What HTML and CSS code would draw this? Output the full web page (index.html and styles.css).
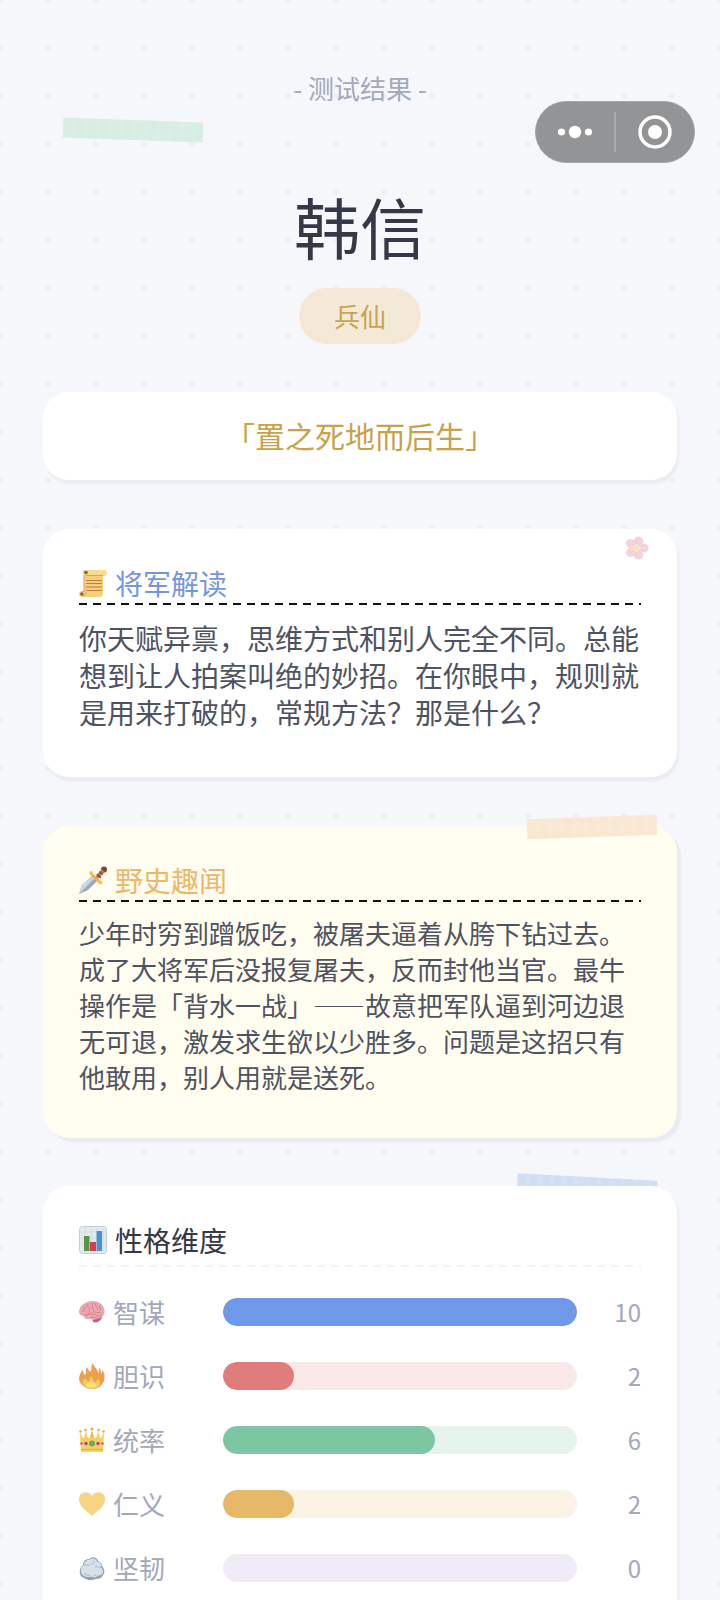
FILE: index.html
```html
<!DOCTYPE html>
<html lang="zh-CN">
<head>
<meta charset="utf-8">
<meta name="viewport" content="width=device-width, initial-scale=1">
<title>测试结果</title>
<link rel="stylesheet" href="styles.css">
</head>
<body>
<div class="capsule">
  <button class="capsule-btn" type="button" aria-label="更多">
    <svg width="36" height="36" viewBox="0 0 36 36" fill="#fff"><circle cx="4.500" cy="18" r="3.600"/><circle cx="18" cy="18" r="6.200"/><circle cx="31.500" cy="18" r="3.600"/></svg>
  </button>
  <span class="capsule-line"></span>
  <button class="capsule-btn" type="button" aria-label="关闭">
    <svg width="36" height="36" viewBox="0 0 36 36"><circle cx="18" cy="18" r="15" fill="none" stroke="#fff" stroke-width="3.500"/><circle cx="18" cy="18" r="7" fill="#fff"/></svg>
  </button>
</div>
<main class="page">
  <header class="hero">
    <span class="tape tape-green"></span>
    <p class="hero-label">- 测试结果 -</p>
    <h1 class="hero-name">韩信</h1>
    <span class="badge">兵仙</span>
  </header>

  <blockquote class="card quote">「置之死地而后生」</blockquote>

  <section class="card reading">
    <svg class="flower" width="24" height="24" viewBox="0 0 24 24"><g fill="#df92ae"><circle cx="13.500" cy="5" r="4.600"/><circle cx="19" cy="12" r="4.600"/><circle cx="13.500" cy="19" r="4.600"/><circle cx="5.500" cy="16.500" r="4.600"/><circle cx="5.500" cy="7.500" r="4.600"/><circle cx="11.500" cy="12" r="5"/></g><path d="M11.500 5v5.500L5.500 8.500M5.500 16l6-2.500V19M18 12h-5" stroke="#c76a92" stroke-width=".8" fill="none"/><path d="M12 7l1.500 3 3.500 2-3.500 2-1.500 3.500-2-3-4 .5 2.500-3L6 9l4 .5z" fill="#f6c35a"/></svg>
    <h2 class="card-title blue">
      <svg width="28" height="28" viewBox="0 0 28 28"><path d="M6 1h19c4 0 3 6 0 6h-1v17c0 3-1 4-3 4H3c-4 0-4-6 0-6h2V6C3 4 3 1 6 1z" fill="#f5d07c"/><path d="M6 1h19c4 0 3 6 0 6H8" fill="#fbdc8c"/><path d="M5 6v15M7 6.500h17M3 22h2c3 1 2 5-1 5" stroke="#d5a452" fill="none"/><circle cx="7" cy="3.500" r="1.800" fill="#8d6038"/><circle cx="2.800" cy="25" r="1.700" fill="#8d6038"/><path d="M7 11.500h16M7 14.500h16M7 18h16M7 21.500h16" stroke="#c17c42" stroke-width="1.200"/></svg>
      将军解读
    </h2>
    <p class="reading-text">你天赋异禀，思维方式和别人完全不同。总能想到让人拍案叫绝的妙招。在你眼中，规则就是用来打破的，常规方法？那是什么？</p>
  </section>

  <section class="card anecdote">
    <span class="tape tape-orange"></span>
    <h2 class="card-title orange">
      <svg width="28" height="28" viewBox="0 0 28 28"><path d="M0 28l3-9L13 10l5 5-9 9z" fill="#9aa8b4"/><path d="M0 28l3-9L13 10l2.500 2.500z" fill="#cbd5dd"/><path d="M15 12l8-9 3 3-8 8z" fill="#c07a55"/><path d="M18 8l4 4M20.500 5.500l3 3" stroke="#854b36" stroke-width="1.500"/><path d="M12 7.500L21.500 17" stroke="#e9b44c" stroke-width="2.500" stroke-linecap="round"/><circle cx="12" cy="7" r="1.900" fill="#f1c55f"/><circle cx="21.500" cy="16.500" r="1.900" fill="#f1c55f"/><circle cx="25" cy="3.500" r="3" fill="#854236"/><path d="M22 3.500l3 3" stroke="#f1c55f"/></svg>
      野史趣闻
    </h2>
    <p class="anecdote-text">少年时穷到蹭饭吃，被屠夫逼着从胯下钻过去。成了大将军后没报复屠夫，反而封他当官。最牛操作是「背水一战」——故意把军队逼到河边退无可退，激发求生欲以少胜多。问题是这招只有他敢用，别人用就是送死。</p>
  </section>

  <div class="stats-wrap">
  <span class="tape tape-blue"></span>
  <section class="card stats">
    <h2 class="card-title dark">
      <svg width="28" height="28" viewBox="0 0 28 28"><rect x=".5" y=".5" width="27" height="27" rx="3" fill="#e3eaee" stroke="#c3cfd5"/><path d="M6 2v24M12 2v24M18 2v24M24 2v24M2 6h24M2 12h24M2 18h24" stroke="#cfdae1"/><path d="M5 10h5.500v15H5z" fill="#559642"/><path d="M11 16h6v9h-6z" fill="#d23f55"/><path d="M17.500 5H23v20h-5.500z" fill="#4c91cf"/></svg>
      性格维度
    </h2>
    <ul class="rows">
      <li class="row">
        <span class="row-name" id="n1"><svg width="26" height="26" viewBox="0 0 26 26"><path d="M0 13C0 6 7 2 14 2c7 0 12 5 11.500 11-.3 3-2 4-2.500 5-1 4-5 6-8 5-2-1-2-3-4-3-4 1-6-1-6-3-3 0-5-2-5-4z" fill="#eba6b0"/><path d="M14 21c3-1 6-1 9-3-1 4-5 6-9 5z" fill="#c9616c"/><path d="M4 13c2-3 0-4 3-5M6 16c3 0 5-1 4-4M9 5c-2 3 2 3 1 6M13 4c2 2-1 4 1 6s0 3-1 4M17 4c-2 3 3 4 1 7M21 6c-1 2 2 4 0 6M5 17c4 0 5-3 9-2s5 3 9 1M11 19c3-3 5 1 9 0M16 13c2 1 4 0 6 1" stroke="#d07f8b" stroke-width=".9" fill="none"/></svg>智谋</span>
        <div class="bar blue-track" role="meter" aria-labelledby="n1" aria-valuemin="0" aria-valuemax="10" aria-valuenow="10"><div class="fill blue-fill" style="width:100%"></div></div>
        <span class="row-value">10</span>
      </li>
      <li class="row">
        <span class="row-name" id="n2"><svg width="26" height="26" viewBox="0 0 26 26"><path d="M0 16c0-4 2-6 3-9 2 2 1 4 3 5 2-3 0-5 2-8 1 3 2 3 3 5 3-3 0-6 3-9 0 4 5 5 5 10 2-1 0-3 1-5 2 2 2 4 2 6 1-1 1-2 1-4 3 3 3 7 2 11-2 5-6 8-12 8S1 22 0 16z" fill="#eba04a"/><path d="M4 20c0-3 1-4 2-5 1 3 3 2 3 4 2-2 1-4 4-6 0 4 3 4 3 7 2-1 1-3 3-4 4 5 2 9-6 10-5 0-9-2-9-6z" fill="#f6c95d"/><path d="M7 22c1-3 3-2 5-4 2 3 5 1 6 4-2 3-9 4-11 0z" fill="#f9df8a"/></svg>胆识</span>
        <div class="bar red-track" role="meter" aria-labelledby="n2" aria-valuemin="0" aria-valuemax="10" aria-valuenow="2"><div class="fill red-fill" style="width:20%"></div></div>
        <span class="row-value">2</span>
      </li>
      <li class="row">
        <span class="row-name" id="n3"><svg width="26" height="26" viewBox="0 0 26 26"><path d="M1 5l3 6h1l1.500-7L9 11h1.500L13 3l2.500 8H17l2.500-7L21 11h1l3-6-1 20H2z" fill="#f7cf67"/><g fill="#e6ae54"><circle cx="1.500" cy="4.500" r="1.300"/><circle cx="6.500" cy="3" r="1.300"/><circle cx="13" cy="2" r="1.600"/><circle cx="19.500" cy="3" r="1.300"/><circle cx="24.500" cy="4.500" r="1.300"/></g><path d="M2 22.500h22M13 5v6" stroke="#e5ac45" fill="none"/><circle cx="13" cy="16.500" r="3" fill="#73a653"/><circle cx="7" cy="16.500" r="1.800" fill="#a64a96"/><circle cx="19" cy="16.500" r="1.800" fill="#a64a96"/><circle cx="2.500" cy="16.500" r="1.200" fill="#d95353"/><circle cx="23.500" cy="16.500" r="1.200" fill="#d95353"/></svg>统率</span>
        <div class="bar green-track" role="meter" aria-labelledby="n3" aria-valuemin="0" aria-valuemax="10" aria-valuenow="6"><div class="fill green-fill" style="width:60%"></div></div>
        <span class="row-value">6</span>
      </li>
      <li class="row">
        <span class="row-name" id="n4"><svg width="26" height="26" viewBox="0 0 26 26"><path d="M13 25C10 21 0 17 0 8 0 0 10-1 13 5c3-6 13-5 13 3 0 9-10 13-13 17z" fill="#f6d583"/></svg>仁义</span>
        <div class="bar gold-track" role="meter" aria-labelledby="n4" aria-valuemin="0" aria-valuemax="10" aria-valuenow="2"><div class="fill gold-fill" style="width:20%"></div></div>
        <span class="row-value">2</span>
      </li>
      <li class="row">
        <span class="row-name" id="n5"><svg width="26" height="26" viewBox="0 0 26 26"><path d="M1 15c0-3 2-4 3-5 0-4 3-6 6-6 3-3 8-2 9 2 3 1 4 3 4 5 3 3 3 7 1 9-1 3-4 4-7 4-5 2-9 1-12-1-3-1-5-4-4-8z" fill="#95a3ad"/><path d="M2 14c0-3 2-3 3-4 0-3 2-5 5-5 3-3 8-1 8 2 3 0 5 2 4 5 2 3 3 5 1 7-2 2-4 1-6 3-3 1-4-1-6 0-3 0-5 0-7-2-2 0-2-4-2-6z" fill="#d7e0e7"/><path d="M5 10c3-1 4 1 6 0M15 6c0 3-2 2-2 4M16 12c3-1 4 1 6 0M5 18c2 3 4 1 6 3M15 20c2 0 2 2 4 1" stroke="#a9b6c0" fill="none"/></svg>坚韧</span>
        <div class="bar purple-track" role="meter" aria-labelledby="n5" aria-valuemin="0" aria-valuemax="10" aria-valuenow="0"></div>
        <span class="row-value">0</span>
      </li>
    </ul>
  </section>
  </div>
</main>
</body>
</html>
```
FILE: styles.css
```css
* {
  box-sizing: border-box;
}

body,
h1,
h2,
p,
ul,
blockquote {
  margin: 0;
  padding: 0;
}

body {
  background-color: #f5f7fb;
  background-image: radial-gradient(circle at center, #edeff3 2px, transparent 3px);
  background-size: 48px 48px;
  background-position: 24px 24px;
  color: #4f5361;
  font-family: "Noto Sans CJK SC", sans-serif;
  font-size: 26px;
}

.page {
  display: flex;
  flex-direction: column;
  min-height: 100vh;
  padding: 0 43px;
}

/* Mini-program capsule */
.capsule {
  position: absolute;
  z-index: 5;
  top: 101px;
  right: 25px;
  width: 160px;
  height: 62px;
  display: flex;
  align-items: center;
  border: 1px solid #a5a7a9;
  border-radius: 31px;
  background: #929496;
}

.capsule-btn {
  flex: 1;
  display: flex;
  justify-content: center;
  padding: 0;
  border: 0;
  background: none;
}

.capsule-line {
  width: 2px;
  height: 40px;
  background: #a9abad;
}

/* Header */
.hero {
  position: relative;
  display: flex;
  flex-direction: column;
  align-items: center;
  padding: 70px 0 48px;
}

.hero-label {
  color: #a3a9ba;
  line-height: 36px;
}

.hero-name {
  margin: 75px 0 19px;
  color: #343847;
  font-size: 66px;
  font-weight: 400;
  line-height: 88px;
}

.badge {
  padding: 0 35px;
  border-radius: 28px;
  background: rgba(244, 226, 200, 0.7);
  color: #c8a44e;
  line-height: 56px;
}

.tape {
  position: absolute;
  width: 140px;
  height: 20px;
}

.tape-green {
  top: 120px;
  left: 20px;
  background: repeating-linear-gradient(90deg, #d8ede4 0 10px, #dcefe7 10px 12px);
  transform: rotate(2deg);
}

.tape-orange {
  top: -9px;
  right: 20px;
  width: 130px;
  background: repeating-linear-gradient(90deg, #f8e8d1 0 10px, #f9ead5 10px 12px);
  transform: rotate(-2deg);
}

.tape-blue {
  top: -9px;
  right: 20px;
  background: repeating-linear-gradient(90deg, #d3def5 0 10px, #d8e1f6 10px 12px);
  transform: rotate(3deg);
}

/* Cards */
.card {
  position: relative;
  padding: 36px;
  border-radius: 26px;
  background: #fff;
  box-shadow: 2px 4px 2px #eaecf2;
}

.quote {
  padding: 21px 36px 23px;
  color: #c8a24a;
  font-size: 30px;
  line-height: 44px;
  text-align: center;
}

.reading {
  margin-top: 49px;
  padding-bottom: 46px;
}

.anecdote {
  margin-top: 49px;
  padding-bottom: 43px;
  background: #fffcf0;
  box-shadow: 4px 4px 1px #eaecf2;
}

.stats-wrap {
  position: relative;
  flex: 1;
  display: flex;
  flex-direction: column;
  margin-top: 48px;
}

.stats {
  flex: 1;
  padding-bottom: 18px;
  border-radius: 26px 26px 0 0;
}

.flower {
  position: absolute;
  top: 7px;
  right: 28px;
  opacity: 0.4;
}

.card-title {
  display: flex;
  align-items: center;
  gap: 8px;
  padding-bottom: 4px;
  background: repeating-linear-gradient(90deg, #111 0 8px, transparent 8px 14px) bottom / 100% 2px no-repeat;
  font-size: 28px;
  font-weight: 400;
  line-height: 36px;
}

.blue {
  color: #7396e0;
}

.orange {
  color: #edb76a;
}

.dark {
  padding-bottom: 9px;
  background-image: repeating-linear-gradient(90deg, #f3f3f5 0 8px, transparent 8px 14px);
  color: #343847;
}

.reading-text {
  margin-top: 15px;
  font-size: 28px;
  line-height: 37px;
}

.anecdote-text {
  margin-top: 13px;
  line-height: 36px;
}

/* Personality rows */
.rows {
  display: flex;
  flex-direction: column;
  gap: 36px;
  margin-top: 31px;
  list-style: none;
}

.row {
  display: grid;
  grid-template-columns: 144px 1fr 64px;
  align-items: center;
  color: #a3a8b8;
  line-height: 28px;
}

.row-name {
  display: flex;
  align-items: center;
  gap: 8px;
}

.row-value {
  font-size: 24px;
  text-align: right;
}

.bar {
  height: 28px;
  border-radius: 14px;
  overflow: hidden;
}

.fill {
  height: 100%;
  border-radius: 14px;
}

.blue-track { background: #e2eafb; }
.blue-fill { background: #7099e9; }
.red-track { background: #f8e8e8; }
.red-fill { background: #e07d7a; }
.green-track { background: #e7f4ed; }
.green-fill { background: #7dc6a3; }
.gold-track { background: #faf2e4; }
.gold-fill { background: #e6b968; }
.purple-track { background: #efecf8; }
```
